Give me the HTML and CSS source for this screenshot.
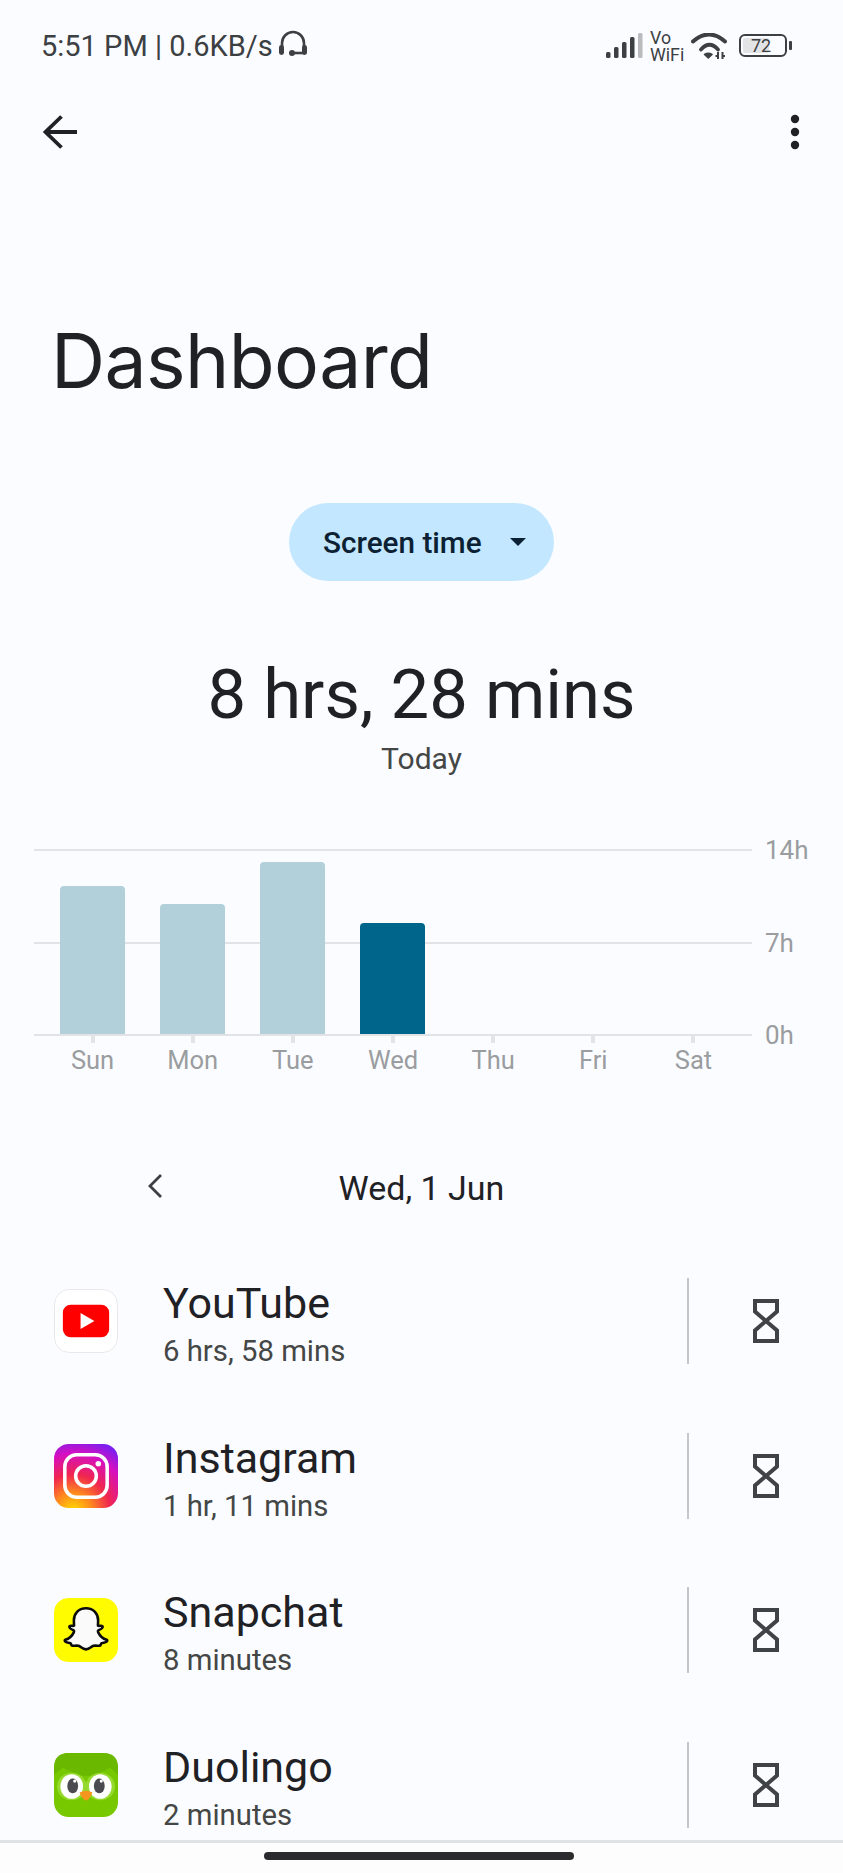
FILE: index.html
```html
<!DOCTYPE html>
<html lang="en">
<head>
<meta charset="utf-8">
<title>Dashboard</title>
<link rel="stylesheet" href="styles.css">
</head>
<body>
<div class="screen">
  <header class="status">
    <div class="status-left">
      <span class="status-text">5:51 PM | 0.6KB/s</span>
      <svg class="headset" viewBox="0 0 30 28" width="30" height="28"><path d="M4 20V14a11 11 0 0 1 22 0v6" fill="none" stroke="#3c4043" stroke-width="2.6"/><rect x="1" y="16" width="5" height="10" rx="2.4" fill="#3c4043"/><rect x="24" y="16" width="5" height="10" rx="2.4" fill="#3c4043"/><path d="M14 24h12" stroke="#3c4043" stroke-width="2.6"/><circle cx="14" cy="24" r="3" fill="#3c4043"/></svg>
    </div>
    <div class="status-right">
      <svg class="signal" viewBox="0 0 37 25" width="37" height="25"><rect x="0" y="19" width="4.500" height="6" rx="1.500" fill="#3c4043"/><rect x="8" y="14" width="4.500" height="11" rx="1.500" fill="#3c4043"/><rect x="16" y="9" width="4.500" height="16" rx="1.500" fill="#3c4043"/><rect x="24" y="4" width="4.500" height="21" rx="1.500" fill="#3c4043"/><rect x="32" y="0" width="4.500" height="25" rx="1.500" fill="#b9bbbd"/></svg>
      <div class="vowifi">Vo<br>WiFi</div>
      <svg class="wifi" viewBox="0 0 36 26" width="36" height="26"><g fill="none" stroke="#3c4043" stroke-linecap="round"><path d="M2 8.500Q18-5.500 34 8.500" stroke-width="4"/><path d="M10 16.500Q18.500 7 27 16.500" stroke-width="3.800"/></g><path d="M13.500 21.500c2.500-1.600 5-1.600 7.500 0l-3.700 3.500z" fill="#3c4043" stroke="#3c4043" stroke-width="1.500" stroke-linejoin="round"/><path d="M27 19v7M31.500 19v7" stroke="#3c4043" stroke-width="2"/><path d="M24.500 23h2.500M31.500 23h2.500" stroke="#3c4043" stroke-width="2"/></svg>
      <div class="battery"><div class="battery-body"><span class="battery-fill"></span><span class="battery-num">72</span></div><span class="battery-nub"></span></div>
    </div>
  </header>

  <nav class="toolbar">
    <svg class="back" viewBox="0 0 36 36" width="36" height="36"><path d="M35 18H4M19.500 2.500L3.500 18l16 15.500" fill="none" stroke="#1f2124" stroke-width="3.800"/></svg>
    <svg class="more" viewBox="0 0 10 36" width="10" height="36"><circle cx="5" cy="5" r="4.200" fill="#1f2124"/><circle cx="5" cy="18" r="4.200" fill="#1f2124"/><circle cx="5" cy="31" r="4.200" fill="#1f2124"/></svg>
  </nav>

  <h1 class="title">Dashboard</h1>

  <div class="pill-wrap">
    <div class="pill"><span>Screen time</span><i class="caret"></i></div>
  </div>

  <div class="total">8 hrs, 28 mins</div>
  <div class="today">Today</div>

  <section class="chart">
    <div class="plot">
      <div class="gridline grid-14"></div>
      <div class="gridline grid-7"></div>
      <div class="gridline grid-0"></div>
      <span class="ylabel y-14">14h</span>
      <span class="ylabel y-7">7h</span>
      <span class="ylabel y-0">0h</span>
      <div class="bars">
        <div class="day"><div class="bar" style="height:148px"></div></div>
        <div class="day"><div class="bar" style="height:130px"></div></div>
        <div class="day"><div class="bar" style="height:172px"></div></div>
        <div class="day"><div class="bar bar-now" style="height:111px"></div></div>
        <div class="day"></div>
        <div class="day"></div>
        <div class="day"></div>
      </div>
    </div>
    <div class="labels">
      <div class="label"><i></i><span>Sun</span></div>
      <div class="label"><i></i><span>Mon</span></div>
      <div class="label"><i></i><span>Tue</span></div>
      <div class="label"><i></i><span>Wed</span></div>
      <div class="label"><i></i><span>Thu</span></div>
      <div class="label"><i></i><span>Fri</span></div>
      <div class="label"><i></i><span>Sat</span></div>
    </div>
  </section>

  <div class="datenav">
    <svg class="chev" viewBox="0 0 16 26" width="16" height="26"><path d="M14 2L3 13l11 11" fill="none" stroke="#3c4043" stroke-width="2.800"/></svg>
    <span class="date">Wed, 1 Jun</span>
  </div>

  <ul class="apps">
    <li class="app">
      <svg class="icon" viewBox="0 0 65 65" width="64" height="64"><rect x=".5" y=".5" width="64" height="64" rx="15" fill="#fff" stroke="#e8e8ea"/><rect x="9" y="16" width="47" height="33" rx="8" fill="#f00"/><path d="M27 24.500v16l14-8z" fill="#fff"/></svg>
      <div class="app-text"><div class="app-name">YouTube</div><div class="app-time">6 hrs, 58 mins</div></div>
      <div class="divider"></div>
      <svg class="hourglass" viewBox="0 0 26 44" width="26" height="44"><path d="M2 2h22v10.500L13 22l11 9.500V42H2V31.500L13 22 2 12.500z" fill="none" stroke="#3f4347" stroke-width="4"/></svg>
    </li>
    <li class="app">
      <svg class="icon" viewBox="0 0 65 65" width="64" height="64"><defs><radialGradient id="ig" cx=".3" cy="1.05" r="1.15"><stop offset="0" stop-color="#fd0"/><stop offset=".25" stop-color="#ff8a1e"/><stop offset=".5" stop-color="#f0264f"/><stop offset=".78" stop-color="#d60fc0"/><stop offset="1" stop-color="#7a1ff0"/></radialGradient></defs><rect width="65" height="65" rx="15" fill="url(#ig)"/><rect x="11" y="11" width="43" height="43" rx="12" fill="none" stroke="#fff" stroke-width="3.600"/><circle cx="32.500" cy="32.500" r="10.500" fill="none" stroke="#fff" stroke-width="3.600"/><circle cx="45" cy="20" r="2.800" fill="#fff"/></svg>
      <div class="app-text"><div class="app-name">Instagram</div><div class="app-time">1 hr, 11 mins</div></div>
      <div class="divider"></div>
      <svg class="hourglass" viewBox="0 0 26 44" width="26" height="44"><path d="M2 2h22v10.500L13 22l11 9.500V42H2V31.500L13 22 2 12.500z" fill="none" stroke="#3f4347" stroke-width="4"/></svg>
    </li>
    <li class="app">
      <svg class="icon" viewBox="0 0 65 65" width="64" height="64"><rect width="65" height="65" rx="15" fill="#fffc00"/><path d="M32.500 10.500c7.800 0 12.300 5.600 12.300 12.200 0 2.200-.1 4-.2 5.400 1.400.7 3.200-.6 4.300.4 1.200 1-.1 2.700-3.500 4.200-1 .5-.9 1.300-.5 2.200 1.700 3.700 4.600 6.400 8.600 7.500.8.3.8 1.200.1 1.800-1.300 1-3.500 1.300-5.300 1.700-.9.3-.6 2.200-1.500 2.500-1.700.5-4.200-.5-6.700.2-2.400.7-4 3.600-7.600 3.600s-5.200-2.900-7.600-3.600c-2.500-.7-5 .3-6.700-.2-.9-.3-.6-2.200-1.500-2.500-1.800-.4-4-.7-5.300-1.700-.7-.6-.7-1.500.1-1.800 4-1.100 6.900-3.800 8.600-7.500.4-.9.5-1.700-.5-2.200-3.400-1.500-4.700-3.200-3.500-4.200 1.100-1 2.900.3 4.300-.4-.1-1.400-.2-3.200-.2-5.400 0-6.600 4.500-12.200 12.300-12.200z" fill="#fafafa" stroke="#0c0c0c" stroke-width="2.600" stroke-linejoin="round"/></svg>
      <div class="app-text"><div class="app-name">Snapchat</div><div class="app-time">8 minutes</div></div>
      <div class="divider"></div>
      <svg class="hourglass" viewBox="0 0 26 44" width="26" height="44"><path d="M2 2h22v10.500L13 22l11 9.500V42H2V31.500L13 22 2 12.500z" fill="none" stroke="#3f4347" stroke-width="4"/></svg>
    </li>
    <li class="app">
      <svg class="icon" viewBox="0 0 65 65" width="64" height="64"><rect width="65" height="65" rx="15" fill="#78c800"/><path d="M0 15Q0 0 15 0h35q15 0 15 15v7l-8-7-4 2-12 6H26l-13-6-4-2-9 7z" fill="#6ab800"/><ellipse cx="18" cy="34" rx="15" ry="14" fill="#96d92f"/><ellipse cx="47" cy="34" rx="15" ry="14" fill="#96d92f"/><ellipse cx="18" cy="34" rx="11.500" ry="12.500" fill="#fff"/><ellipse cx="47" cy="34" rx="11.500" ry="12.500" fill="#fff"/><ellipse cx="19" cy="33.500" rx="5.500" ry="7.500" fill="#4b4b4f"/><ellipse cx="46" cy="33.500" rx="5.500" ry="7.500" fill="#4b4b4f"/><circle cx="21" cy="28.500" r="1.600" fill="#fff"/><circle cx="48" cy="28.500" r="1.600" fill="#fff"/><path d="M26 40q6.500-3.500 13 0-2 6-6.500 8.500Q28 46 26 40z" fill="#f6961f"/></svg>
      <div class="app-text"><div class="app-name">Duolingo</div><div class="app-time">2 minutes</div></div>
      <div class="divider"></div>
      <svg class="hourglass" viewBox="0 0 26 44" width="26" height="44"><path d="M2 2h22v10.500L13 22l11 9.500V42H2V31.500L13 22 2 12.500z" fill="none" stroke="#3f4347" stroke-width="4"/></svg>
    </li>
  </ul>

  <footer class="navbar"><div class="home"></div></footer>
</div>
</body>
</html>
```
FILE: styles.css
```css
* { box-sizing: border-box; }
html, body { margin: 0; padding: 0; }
body { background: #fbfcff; font-family: Roboto, "Liberation Sans", sans-serif; color: #1f2124; }
.screen { width: 843px; height: 1873px; display: flex; flex-direction: column; overflow: hidden; position: relative; }

.status { height: 92px; flex: none; display: flex; justify-content: space-between; align-items: center; padding: 0 51px 0 41px; }
.status-left { display: flex; align-items: center; gap: 5px; }
.status-text { font-size: 29px; color: #3c4043; line-height: 32px; }
.headset { margin-top: -6px; }
.status-right { display: flex; align-items: center; }
.signal { margin-top: -2px; }
.vowifi { margin-left: 7px; color: #3c4043; width: 41px; font-size: 17.8px; line-height: 17.5px; }
.wifi { margin-top: 0; }
.battery { display: flex; align-items: center; margin-left: 12px; margin-top: -1px; }
.battery-body { position: relative; width: 48px; height: 23px; border: 2.5px solid #3c4043; border-radius: 6px; display: flex; align-items: center; justify-content: center; }
.battery-fill { position: absolute; left: 2px; top: 2px; bottom: 2px; width: 26px; background: #e2e3e5; border-radius: 2px; }
.battery-num { position: relative; font-size: 18px; line-height: 18px; color: #3c4043; margin-right: 4px; }
.battery-nub { width: 3px; height: 9px; background: #3c4043; margin-left: 2px; border-radius: 1px; }

.toolbar { height: 80px; flex: none; display: flex; justify-content: space-between; align-items: center; padding: 0 43px 0 42px; }

.title { margin: 141px 0 0 51px; font-family: Inter, Roboto, sans-serif; font-weight: 400; font-size: 75px; letter-spacing: -0.6px; line-height: 96px; color: #1f2124; height: 96px; }

.pill-wrap { display: flex; justify-content: center; margin-top: 94px; }
.pill { width: 265px; height: 78px; border-radius: 39px; background: #c2e7ff; display: flex; align-items: center; padding-left: 34px; font-size: 29.7px; font-weight: 500; color: #0b2133; }
.caret { width: 0; height: 0; border-left: 8px solid transparent; border-right: 8px solid transparent; border-top: 8px solid #0b2133; margin-left: 28px; }

.total { margin-top: 74px; text-align: center; font-size: 68.8px; line-height: 80px; color: #1f2124; }
.today { margin-top: 6px; text-align: center; font-size: 30px; line-height: 36px; color: #444746; }

.chart { margin-top: 72px; padding-left: 34px; }
.plot { position: relative; height: 187px; width: 718px; }
.gridline { position: absolute; left: 0; right: 0; height: 2px; background: #e1e3e6; }
.grid-14 { top: 0; }
.grid-7 { top: 93px; }
.grid-0 { top: 185px; }
.ylabel { position: absolute; left: 731px; font-size: 26px; line-height: 30px; color: #9a9da0; }
.y-14 { top: -14px; }
.y-7 { top: 79px; }
.y-0 { top: 171px; }
.bars { position: absolute; left: 8.5px; top: 0; height: 185px; width: 701px; display: flex; align-items: flex-end; }
.day { flex: 1; display: flex; justify-content: center; }
.bar { width: 65px; background: #b2d0da; border-radius: 4px 4px 0 0; }
.bar-now { background: #00658b; }
.labels { display: flex; width: 701px; margin-left: 8.5px; }
.label { flex: 1; display: flex; flex-direction: column; align-items: center; }
.label i { width: 4px; height: 7px; background: #e3e4e6; }
.label span { font-size: 25.5px; line-height: 30px; margin-top: 2px; color: #9a9da0; }

.datenav { position: relative; margin-top: 92.5px; height: 40px; display: flex; justify-content: center; align-items: center; }
.chev { position: absolute; left: 147px; top: 5px; }
.date { font-size: 34px; line-height: 40px; color: #1f2124; }

.apps { list-style: none; margin: 36.5px 0 0; padding: 0 64px 0 54px; flex: none; }
.app { height: 154.5px; display: flex; align-items: center; }
.icon { flex: none; }
.app-text { flex: 1; margin-left: 45px; padding-top: 6px; }
.app-name { font-size: 43px; line-height: 46px; color: #1f2124; }
.app-time { font-size: 29.3px; line-height: 34px; color: #444746; margin-top: 8px; }
.divider { width: 2px; height: 86px; background: #c4c7c5; flex: none; }
.hourglass { flex: none; margin-left: 64px; }

.navbar { position: absolute; left: 0; right: 0; bottom: 0; height: 33px; background: #fdfdfe; border-top: 3px solid #dfe1e3; display: flex; justify-content: center; padding: 9px 6px 0 0; }
.home { width: 310px; height: 8px; border-radius: 4px; background: #2b2b2d; }
```
